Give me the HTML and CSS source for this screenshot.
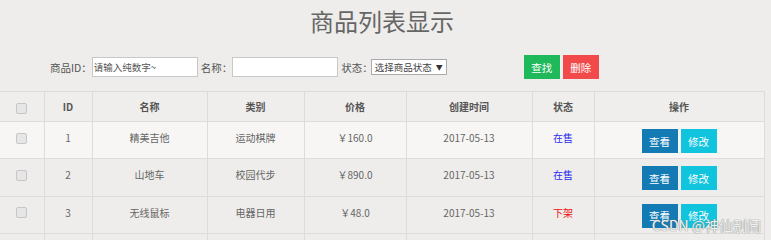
FILE: index.html
```html
<!DOCTYPE html>
<html lang="zh">
<head>
<meta charset="utf-8">
<title>商品列表显示</title>
<link rel="stylesheet" href="styles.css">
</head>
<body>
<div class="page">
  <h1 class="title">商品列表显示</h1>
  <form class="filter">
    <label class="lbl">商品ID：</label>
    <input class="inp inp-id" type="text" value="请输入纯数字~">
    <label class="lbl">名称：</label>
    <input class="inp inp-name" type="text">
    <label class="lbl">状态：</label>
    <span class="sel">选择商品状态 <span class="arrow">▼</span></span>
    <div class="actions">
      <button type="button" class="btn btn-green">查找</button>
      <button type="button" class="btn btn-red">删除</button>
    </div>
  </form>
  <table class="grid">
    <colgroup>
      <col class="c1"><col class="c2"><col class="c3"><col class="c4"><col class="c5"><col class="c6"><col class="c7"><col class="c8">
    </colgroup>
    <thead>
      <tr>
        <th><span class="cb"></span></th>
        <th>ID</th>
        <th>名称</th>
        <th>类别</th>
        <th>价格</th>
        <th>创建时间</th>
        <th>状态</th>
        <th>操作</th>
      </tr>
    </thead>
    <tbody>
      <tr class="odd">
        <td><span class="cb"></span></td>
        <td>1</td>
        <td>精美吉他</td>
        <td>运动棋牌</td>
        <td>￥160.0</td>
        <td>2017-05-13</td>
        <td class="on">在售</td>
        <td><span class="ops"><button type="button" class="btn btn-blue">查看</button><button type="button" class="btn btn-cyan">修改</button></span></td>
      </tr>
      <tr>
        <td><span class="cb"></span></td>
        <td>2</td>
        <td>山地车</td>
        <td>校园代步</td>
        <td>￥890.0</td>
        <td>2017-05-13</td>
        <td class="on">在售</td>
        <td><span class="ops"><button type="button" class="btn btn-blue">查看</button><button type="button" class="btn btn-cyan">修改</button></span></td>
      </tr>
      <tr>
        <td><span class="cb"></span></td>
        <td>3</td>
        <td>无线鼠标</td>
        <td>电器日用</td>
        <td>￥48.0</td>
        <td>2017-05-13</td>
        <td class="off">下架</td>
        <td><span class="ops"><button type="button" class="btn btn-blue">查看</button><button type="button" class="btn btn-cyan">修改</button></span></td>
      </tr>
      <tr>
        <td></td><td></td><td></td><td></td><td></td><td></td><td></td><td></td>
      </tr>
    </tbody>
  </table>
  <div class="watermark">CSDN @神仙别闹</div>
</div>
</body>
</html>
```

FILE: styles.css
```css
html, body {
  margin: 0;
  padding: 0;
  background: #eeedeb;
}
body {
  font-family: "Noto Sans CJK SC", "Noto Sans", sans-serif;
  font-size: 10px;
  color: #666;
  overflow: hidden;
}
.page {
  width: 764px;
  position: relative;
}
.title {
  margin: 0;
  padding-top: 3px;
  height: 40px;
  font-size: 24px;
  line-height: 36px;
  font-weight: normal;
  color: #666;
  text-align: center;
}
.filter {
  display: flex;
  align-items: center;
  height: 24px;
  margin-top: 12px;
  padding-left: 50px;
}
.lbl {
  color: #555;
  font-size: 10.5px;
  margin-right: 0;
}
.inp {
  box-sizing: border-box;
  height: 20px;
  border: 1px solid #c8c8c8;
  background: #fff;
  font-family: inherit;
  font-size: 9.5px;
  color: #555;
  padding: 0 1px;
  margin: 0 3px 0 0;
}
.inp-id { width: 106px; }
.inp-name { width: 106px; }
.sel {
  box-sizing: border-box;
  width: 76px;
  height: 16px;
  border: 1px solid #aaa;
  background: #fff;
  color: #444;
  font-size: 9.5px;
  line-height: 14px;
  white-space: nowrap;
  display: inline-flex;
  align-items: center;
  justify-content: space-between;
  padding: 0 3px;
  margin-left: -2px;
}
.arrow { font-size: 7px; color: #333; }
.actions {
  display: flex;
  gap: 3px;
  margin-left: 77px;
}
.btn {
  box-sizing: border-box;
  width: 36px;
  height: 24px;
  border: none;
  padding: 0;
  color: #fff;
  font-family: inherit;
  font-size: 10.5px;
  cursor: pointer;
}
.btn-green { background: #1fb95c; }
.btn-red { background: #f24a4a; }
.btn-blue { background: #137ab3; }
.btn-cyan { background: #10c4de; }

.grid {
  width: 764px;
  border-collapse: collapse;
  table-layout: fixed;
  margin-top: 12px;
}
.c1 { width: 44px; }
.c2 { width: 48px; }
.c3 { width: 115px; }
.c4 { width: 97px; }
.c5 { width: 102px; }
.c6 { width: 126px; }
.c7 { width: 62px; }
.c8 { width: 170px; }
.grid th, .grid td {
  border: 1px solid #dddcda;
  text-align: center;
  padding: 0;
}
.grid tr > :first-child { border-left: none; }
.grid th {
  height: 29px;
  font-weight: bold;
  color: #555;
  vertical-align: middle;
  background: #efeeec;
}
.grid td {
  height: 37.3px;
  vertical-align: top;
  padding-top: 7px;
  box-sizing: border-box;
  line-height: 17px;
}
.grid tbody tr { background: #eeedeb; }
.grid tbody tr.odd { background: #f7f6f4; }
.cb {
  display: inline-block;
  width: 9px;
  height: 9px;
  border: 1px solid #c6c6c6;
  border-radius: 2px;
  background: #e6e6e6;
  vertical-align: middle;
}
.grid td .cb { margin-top: -2px; }
.on { color: #2b2bf0; }
.off { color: #f01010; }
.ops {
  display: inline-flex;
  gap: 3px;
}
.watermark {
  position: absolute;
  left: 652px;
  top: 215px;
  font-size: 14px;
  color: rgba(255, 255, 255, 0.9);
  text-shadow: 0 0 1px #888, 0 0 1px #888;
  white-space: nowrap;
}
```
